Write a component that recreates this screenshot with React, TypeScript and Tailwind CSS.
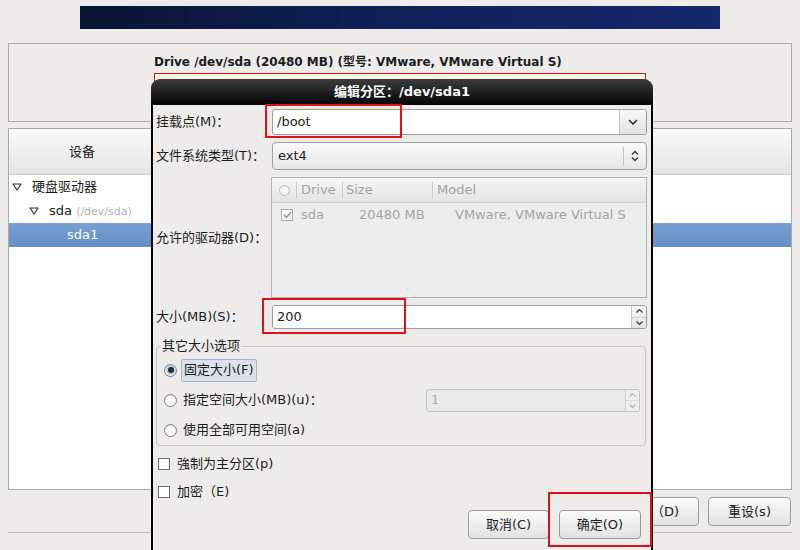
import React from 'react';

const ChevronDown = () => (
  <svg width="10" height="6" viewBox="0 0 10 6" fill="none">
    <path d="M1 1l4 4 4-4" stroke="#2e2e2e" strokeWidth="1.6" />
  </svg>
);

const UpDown = ({ color = '#2e2e2e' }: { color?: string }) => (
  <svg width="8" height="12" viewBox="0 0 8 12" fill="none">
    <path d="M1 4.5l3-3 3 3" stroke={color} strokeWidth="1.3" />
    <path d="M1 7.5l3 3 3-3" stroke={color} strokeWidth="1.3" />
  </svg>
);

const Expander = () => (
  <svg width="10" height="8" viewBox="0 0 10 8" fill="none">
    <path d="M1 1h8L5 7z" stroke="#333" strokeWidth="1.2" strokeLinejoin="round" />
  </svg>
);

const Radio = ({ on }: { on?: boolean }) => (
  <span className="flex h-[13px] w-[13px] items-center justify-center rounded-full border border-[#7c7c7c] bg-white shadow-[inset_0_1px_1px_rgba(0,0,0,0.12)]">
    {on && <span className="h-[6px] w-[6px] rounded-full bg-[#2b2b2b] ring-2 ring-[#b8c9e0]" />}
  </span>
);

const Check = () => <span className="h-[12px] w-[12px] border border-[#6f6f6f] bg-white" />;

const Btn = ({ label, w, align = 'justify-center' }: { label: string; w: string; align?: string }) => (
  <div
    className={`flex h-[29px] ${w} ${align} items-center rounded-[4px] border border-[#9c9c9c] bg-gradient-to-b from-[#fbfbfb] to-[#e2e2e2] shadow-[inset_0_1px_0_#fff]`}
  >
    {label}
  </div>
);

export default function App() {
  return (
    <div className="relative h-[550px] w-[800px] overflow-hidden bg-[#edeceb] font-['DejaVu_Sans','Noto_Sans_CJK_SC',sans-serif] text-[13px] leading-[16px] text-[#1c1c1c]">
      {/* banner */}
      <div className="pl-[80px] pt-[6px]">
        <div className="h-[23px] w-[640px] bg-gradient-to-r from-[#0a1532] via-[#10205a] to-[#15276d]" />
      </div>

      {/* drive overview */}
      <div className="mx-[8px] mt-[14px] h-[79px] border border-[#ababab] pl-[145px] pt-[10px]">
        <div className="text-[12px] font-bold">Drive /dev/sda (20480 MB) (型号: VMware, VMware Virtual S)</div>
        <div className="mt-[3px] h-[30px] w-[492px] border border-[#d4161e] bg-[#fdf6e4]" />
      </div>

      {/* device tree */}
      <div className="mx-[8px] mt-[6px] h-[362px] border border-[#a9a9a9] bg-white">
        <div className="flex h-[46px] border-b border-[#cacaca] bg-gradient-to-b from-[#fafafa] to-[#e4e4e4]">
          <div className="flex w-[147px] items-center justify-center border-r border-[#d2d2d2]">设备</div>
        </div>
        <div className="flex h-[24px] items-center gap-[10px] pl-[3px]">
          <Expander />
          <span>硬盘驱动器</span>
        </div>
        <div className="flex h-[24px] items-center gap-[10px] pl-[20px]">
          <Expander />
          <span>
            sda <span className="text-[11px] text-[#b4b4b4]">(/dev/sda)</span>
          </span>
        </div>
        <div className="flex h-[24px] items-center bg-gradient-to-b from-[#77a0d3] to-[#6690c6] pl-[58px] text-white">
          sda1
        </div>
      </div>

      <div className="mt-[7px] flex justify-end gap-[9px] pr-[9px]">
        <Btn label="删除（D)" w="w-[80px] pl-[5px]" align="justify-start" />
        <Btn label="重设(s)" w="w-[83px]" />
      </div>
      <div className="mx-[8px] mt-[6px] h-px bg-[#bdbdbd]" />

      {/* edit partition dialog */}
      <div className="absolute left-[151px] top-[79px] w-[502px]">
        <div className="flex h-[26px] items-center justify-center rounded-t-[9px] bg-gradient-to-b from-[#3e3e3e] to-[#060606] font-bold text-white">
          编辑分区：/dev/sda1
        </div>
        <div className="h-[460px] border-x-2 border-black bg-[#edeceb] pl-[3px] pr-[4px]">
          {/* mount point */}
          <div className="flex items-center pt-[4px]">
            <div className="w-[116px]">挂载点(M)：</div>
            <div className="flex h-[26px] flex-1 overflow-hidden rounded-[3px] border border-[#9e9e9e] bg-white">
              <div className="flex flex-1 items-center pl-[4px]">/boot</div>
              <div className="flex w-[27px] items-center justify-center border-l border-[#c4c4c4] bg-gradient-to-b from-[#f7f7f7] to-[#e3e3e3]">
                <ChevronDown />
              </div>
            </div>
          </div>

          {/* fs type */}
          <div className="mt-[7px] flex items-center">
            <div className="w-[116px]">文件系统类型(T)：</div>
            <div className="flex h-[28px] flex-1 items-center rounded-[4px] border border-[#a2a2a2] bg-gradient-to-b from-[#fafafa] to-[#e6e6e6] pl-[5px]">
              <div className="flex-1">ext4</div>
              <div className="h-[18px] w-px bg-[#c2c2c2]" />
              <div className="flex w-[22px] justify-center">
                <UpDown />
              </div>
            </div>
          </div>

          {/* allowed drives */}
          <div className="mt-[7px] flex items-center">
            <div className="w-[115px]">允许的驱动器(D)：</div>
            <div className="h-[121px] flex-1 border border-[#b3b3b3] bg-[#eeeded] text-[#a3a3a3]">
              <div className="flex h-[25px] items-center border-b border-[#d0d0d0] bg-gradient-to-b from-[#f6f6f6] to-[#e4e4e4]">
                <div className="flex w-[24px] justify-center">
                  <span className="h-[11px] w-[11px] rounded-full border border-[#b9b9b9] bg-[#f6f6f6]" />
                </div>
                <div className="h-[16px] w-px bg-[#cbcbcb]" />
                <div className="w-[45px] pl-[4px]">Drive</div>
                <div className="h-[16px] w-px bg-[#cbcbcb]" />
                <div className="w-[89px] pl-[3px]">Size</div>
                <div className="h-[16px] w-px bg-[#cbcbcb]" />
                <div className="pl-[4px]">Model</div>
              </div>
              <div className="flex h-[24px] items-center">
                <div className="flex w-[29px] justify-center pl-[1px]">
                  <span className="flex h-[12px] w-[12px] items-center justify-center border border-[#aaaaaa] bg-[#f6f6f6]">
                    <svg width="9" height="8" viewBox="0 0 9 8" fill="none">
                      <path d="M1 4l2.5 2.5L8 1" stroke="#8e8e8e" strokeWidth="1.4" />
                    </svg>
                  </span>
                </div>
                <div className="w-[58px]">sda</div>
                <div className="w-[96px]">20480 MB</div>
                <div className="whitespace-nowrap">VMware, VMware Virtual S</div>
              </div>
            </div>
          </div>

          {/* size */}
          <div className="mt-[7px] flex items-center">
            <div className="w-[116px]">大小(MB)(S)：</div>
            <div className="flex h-[24px] flex-1 overflow-hidden rounded-[3px] border border-[#9e9e9e] bg-white">
              <div className="flex flex-1 items-center pl-[4px]">200</div>
              <div className="flex w-[15px] flex-col border-l border-[#c4c4c4] bg-gradient-to-b from-[#f7f7f7] to-[#e3e3e3]">
                <div className="flex flex-1 items-center justify-center border-b border-[#cfcfcf]">
                  <svg width="7" height="4" viewBox="0 0 7 4" fill="none">
                    <path d="M0.5 3.5l3-3 3 3" stroke="#333" strokeWidth="1.1" />
                  </svg>
                </div>
                <div className="flex flex-1 items-center justify-center">
                  <svg width="7" height="4" viewBox="0 0 7 4" fill="none">
                    <path d="M0.5 0.5l3 3 3-3" stroke="#333" strokeWidth="1.1" />
                  </svg>
                </div>
              </div>
            </div>
          </div>

          {/* other size options */}
          <fieldset className="mr-[1px] mt-[9px] rounded-[4px] border border-[#c3c3c3] pl-[7px] pr-[5px] pt-[1px]">
            <legend className="-ml-[3px] px-[1px] leading-[16px]">其它大小选项</legend>
            <div className="flex h-[30px] items-center">
              <Radio on />
              <div className="ml-[4px] flex h-[23px] items-center rounded-[2px] border border-[#a6b5c8] bg-[#dae1ea] px-[2px]">
                固定大小(F)
              </div>
            </div>
            <div className="flex h-[30px] items-center">
              <Radio />
              <div className="ml-[6px] flex-1">指定空间大小(MB)(u)：</div>
              <div className="flex h-[23px] w-[214px] overflow-hidden rounded-[3px] border border-[#c3c3c3] bg-[#ebebeb] text-[#a8a8a8]">
                <div className="flex flex-1 items-center pl-[4px]">1</div>
                <div className="flex w-[14px] flex-col border-l border-[#d2d2d2] bg-[#efefef]">
                  <div className="flex flex-1 items-center justify-center border-b border-[#d8d8d8]">
                    <svg width="7" height="4" viewBox="0 0 7 4" fill="none">
                      <path d="M0.5 3.5l3-3 3 3" stroke="#b0b0b0" strokeWidth="1.1" />
                    </svg>
                  </div>
                  <div className="flex flex-1 items-center justify-center">
                    <svg width="7" height="4" viewBox="0 0 7 4" fill="none">
                      <path d="M0.5 0.5l3 3 3-3" stroke="#b0b0b0" strokeWidth="1.1" />
                    </svg>
                  </div>
                </div>
              </div>
            </div>
            <div className="flex h-[30px] items-center">
              <Radio />
              <div className="ml-[6px]">使用全部可用空间(a)</div>
            </div>
          </fieldset>

          {/* checkboxes */}
          <div className="mt-[4px] flex h-[28px] items-center gap-[7px] pl-[2px]">
            <Check />
            <span>強制为主分区(p)</span>
          </div>
          <div className="flex h-[28px] items-center gap-[7px] pl-[2px]">
            <Check />
            <span>加密（E)</span>
          </div>

          {/* actions */}
          <div className="mt-[4px] flex justify-end gap-[10px] pr-[6px]">
            <Btn label="取消(C)" w="w-[81px]" />
            <Btn label="确定(O)" w="w-[82px]" />
          </div>
        </div>
      </div>

      {/* red annotation boxes */}
      <div className="absolute left-[265px] top-[104px] h-[34px] w-[137px] border-2 border-[#dd1219]" />
      <div className="absolute left-[262px] top-[298px] h-[36px] w-[144px] border-2 border-[#dd1219]" />
      <div className="absolute left-[548px] top-[492px] h-[55px] w-[104px] border-2 border-[#dd1219]" />
    </div>
  );
}
